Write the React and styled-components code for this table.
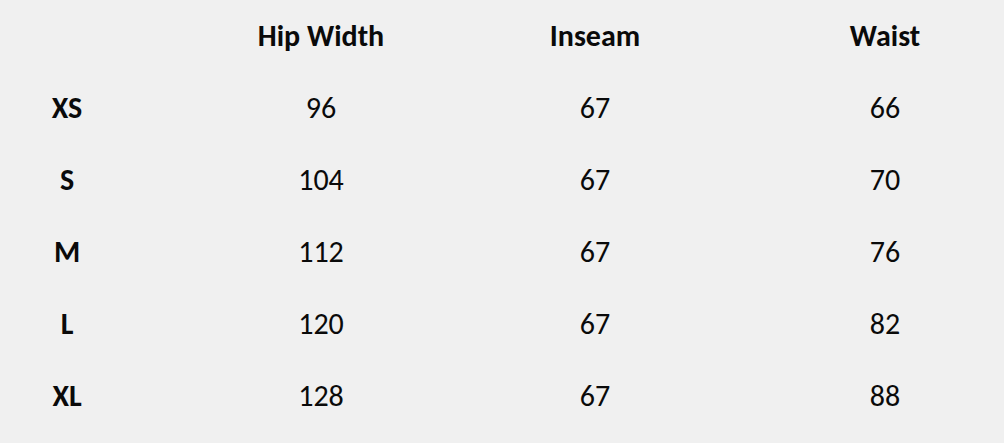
import styled, { createGlobalStyle } from "styled-components";

const GlobalStyle = createGlobalStyle`
  html, body {
    margin: 0;
    padding: 0;
    background: #f0f0f0;
  }
  body {
    font-family: "Carlito", "Lato", "Open Sans", sans-serif;
    color: #0a0a0a;
  }
`;

const Page = styled.div`
  width: 1004px;
  height: 443px;
  background: #f0f0f0;
  overflow: hidden;
`;

const Table = styled.div`
  display: grid;
  grid-template-columns: 134px 374px 174px 322px;
  grid-auto-rows: 72px;
  align-items: center;
`;

const Cell = styled.div`
  text-align: center;
  font-size: 30px;
  line-height: 1;
  font-weight: ${(p) => (p.$bold ? 700 : 400)};
  padding-left: ${(p) => p.$shift || 0}px;
`;

const headers = ["Hip Width", "Inseam", "Waist"];

const rows = [
  ["XS", 96, 67, 66],
  ["S", 104, 67, 70],
  ["M", 112, 67, 76],
  ["L", 120, 67, 82],
  ["XL", 128, 67, 88],
];

// last column is centred a bit right of its track
const shifts = [0, 0, 0, 84];

export default function App() {
  return (
    <Page>
      <GlobalStyle />
      <Table>
        <Cell />
        {headers.map((h, i) => (
          <Cell key={h} $bold $shift={shifts[i + 1]}>
            {h}
          </Cell>
        ))}
        {rows.map((r) =>
          r.map((v, i) => (
            <Cell key={r[0] + i} $bold={i === 0} $shift={shifts[i]}>
              {v}
            </Cell>
          ))
        )}
      </Table>
    </Page>
  );
}
